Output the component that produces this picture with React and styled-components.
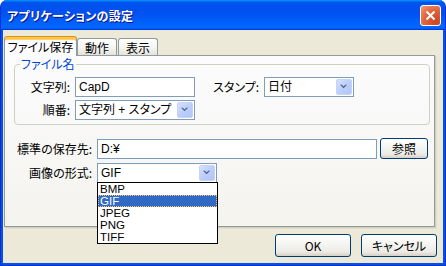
import React from "react";
import styled, { createGlobalStyle } from "styled-components";

const GlobalStyle = createGlobalStyle`
  html, body {
    margin: 0;
    padding: 0;
    background: #ffffff;
  }
  body {
    font-family: "Liberation Sans", "Noto Sans CJK JP", sans-serif;
    font-size: 12px;
    font-feature-settings: "palt";
    color: #000;
  }
`;

const Window = styled.div`
  width: 446px;
  height: 266px;
  box-sizing: border-box;
  display: flex;
  flex-direction: column;
  background: #0a4fe3;
  border: 1px solid #0831d9;
  border-top: none;
  border-radius: 7px 7px 0 0;
  overflow: hidden;
`;

const TitleBar = styled.div`
  height: 30px;
  flex: none;
  margin: 0 -1px;
  display: flex;
  align-items: center;
  justify-content: space-between;
  padding: 0 5px 0 7px;
  background: linear-gradient(
    180deg,
    #0997ff,
    #0053ee 8%,
    #0050ee 40%,
    #06f 88%,
    #06f 93%,
    #005bff 95%,
    #003dd7 96%,
    #003dd7
  );
`;

const Title = styled.div`
  color: #fff;
  font-family: "Noto Sans CJK JP", sans-serif;
  font-weight: bold;
  font-size: 12px;
  letter-spacing: 0.3px;
  text-shadow: 1px 1px 0 #0f1089;
  padding-top: 1px;
`;

const CloseButton = styled.div`
  width: 21px;
  height: 21px;
  box-sizing: border-box;
  border: 1px solid #fff;
  border-radius: 3px;
  background: radial-gradient(circle at 80% 85%, #cc4625 0%, #e0643c 55%, #f29a7b 100%);
  display: flex;
  align-items: center;
  justify-content: center;
`;

const Body = styled.div`
  flex: 1;
  margin: 0 2px 2px;
  background: #ece9d8;
  padding: 6px 6px 6px 1px;
  display: flex;
  flex-direction: column;
`;

const TabStrip = styled.div`
  height: 19px;
  display: flex;
  align-items: flex-end;
`;

const Tab = styled.div`
  position: relative;
  box-sizing: border-box;
  width: ${(p) => p.$width}px;
  height: ${(p) => (p.$active ? 20 : 17)}px;
  margin-bottom: ${(p) => (p.$active ? -1 : 0)}px;
  margin-left: ${(p) => p.$gap || 0}px;
  z-index: ${(p) => (p.$active ? 2 : 1)};
  border: 1px solid #919b9c;
  border-bottom: none;
  border-radius: 3px 3px 0 0;
  background: ${(p) =>
    p.$active ? "#fcfcfe" : "linear-gradient(180deg, #ffffff, #f3f3ef 60%, #e4e3db)"};
  box-shadow: ${(p) => (p.$active ? "inset 0 2px 0 #ffc83c, inset 0 3px 0 #f9d271" : "none")};
  border-top-color: ${(p) => (p.$active ? "#e68b2c" : "#919b9c")};
  display: flex;
  align-items: center;
  justify-content: center;
  padding-top: 1px;
  font-family: "Noto Sans CJK JP", sans-serif;
  line-height: 12px;
`;

const Panel = styled.div`
  height: 172px;
  box-sizing: border-box;
  margin-right: 2px;
  border: 1px solid #919b9c;
  background: linear-gradient(180deg, #fcfcfe, #f4f3ee);
  box-shadow: 1px 1px 0 #d0cebf, 2px 2px 0 #e3e0d0;
  padding: 8px 4px 0 9px;
  display: flex;
  flex-direction: column;
`;

const Group = styled.div`
  position: relative;
  height: 61px;
  box-sizing: border-box;
  border: 1px solid #d0d0bf;
  border-radius: 4px;
  padding: 12px 0 0 0;
  display: flex;
  flex-direction: column;
  gap: 3px;
`;

const Legend = styled.div`
  position: absolute;
  top: -7px;
  left: 5px;
  padding: 0 1px;
  background: #fbfbfc;
  color: #0046d5;
  font-family: "Noto Sans CJK JP", sans-serif;
  line-height: 12px;
`;

const Row = styled.div`
  display: flex;
  align-items: center;
  margin-top: ${(p) => p.$top || 0}px;
`;

const Label = styled.div`
  width: ${(p) => p.$width}px;
  margin-right: 5px;
  text-align: right;
  font-family: "Noto Sans CJK JP", sans-serif;
  line-height: 14px;
  white-space: nowrap;
`;

const TextBox = styled.div`
  width: ${(p) => p.$width}px;
  height: 20px;
  box-sizing: border-box;
  border: 1px solid #7f9db9;
  background: #fff;
  padding-left: 3px;
  display: flex;
  align-items: center;
  line-height: 14px;
`;

const SelectBox = styled.div`
  position: relative;
  width: ${(p) => p.$width}px;
  height: 20px;
  box-sizing: border-box;
  border: 1px solid #7f9db9;
  background: #fff;
  padding-left: 3px;
  display: flex;
  align-items: center;
  justify-content: space-between;
  line-height: 14px;
`;

const ArrowButton = styled.div`
  width: 16px;
  height: 16px;
  margin: 1px;
  box-sizing: border-box;
  border: 1px solid #c5d3f6;
  border-radius: 2px;
  background: linear-gradient(135deg, #d6e1fd 0%, #bccefa 50%, #b1c5f8 100%);
  display: flex;
  align-items: center;
  justify-content: center;
`;

const DropList = styled.div`
  position: absolute;
  top: 100%;
  left: -1px;
  width: ${(p) => p.$width}px;
  box-sizing: border-box;
  border: 1px solid #000;
  background: #fff;
  z-index: 5;
`;

const DropItem = styled.div`
  height: 12px;
  overflow: hidden;
  font-size: 11.5px;
  line-height: 12px;
  padding-left: 2px;
  background: ${(p) => (p.$selected ? "#316ac5" : "transparent")};
  color: ${(p) => (p.$selected ? "#fff" : "#000")};
  outline: ${(p) => (p.$selected ? "1px dotted #f4c56a" : "none")};
  outline-offset: -1px;
`;

const XPButton = styled.div`
  width: ${(p) => p.$width}px;
  height: ${(p) => p.$height || 23}px;
  box-sizing: border-box;
  margin-left: ${(p) => p.$gap || 0}px;
  border: 1px solid #003c74;
  border-radius: 3px;
  background: linear-gradient(180deg, #ffffff 0%, #f4f4f0 45%, #ecebe6 80%, #d6d0c5 100%);
  display: flex;
  align-items: center;
  justify-content: center;
  font-family: "Noto Sans CJK JP", sans-serif;
  line-height: 14px;
`;

const ButtonRow = styled.div`
  margin-top: 7px;
  display: flex;
  justify-content: flex-end;
`;

function Chevron() {
  return (
    <svg width="16" height="16" viewBox="0 0 16 16">
      <polygon points="3.5,5.5 5.5,5.5 7.5,7.5 9.5,5.5 11.5,5.5 7.5,9.5" fill="#4d6185" />
    </svg>
  );
}

function Select({ width, value, children }) {
  return (
    <SelectBox $width={width}>
      <span>{value}</span>
      <ArrowButton>
        <Chevron />
      </ArrowButton>
      {children}
    </SelectBox>
  );
}

const formats = ["BMP", "GIF", "JPEG", "PNG", "TIFF"];

export default function App() {
  return (
    <>
      <GlobalStyle />
      <Window>
        <TitleBar>
          <Title>アプリケーションの設定</Title>
          <CloseButton>
            <svg width="13" height="13" viewBox="0 0 13 13">
              <path d="M2.5 2.5 L10.5 10.5 M10.5 2.5 L2.5 10.5" stroke="#fff" strokeWidth="2" />
            </svg>
          </CloseButton>
        </TitleBar>
        <Body>
          <TabStrip>
            <Tab $active $width={73}>ファイル保存</Tab>
            <Tab $width={40}>動作</Tab>
            <Tab $width={40} $gap={1}>表示</Tab>
          </TabStrip>
          <Panel>
            <Group>
              <Legend>ファイル名</Legend>
              <Row>
                <Label $width={55}>文字列:</Label>
                <TextBox $width={120}>CapD</TextBox>
                <Label $width={64}>スタンプ:</Label>
                <Select width={90} value="日付" />
              </Row>
              <Row>
                <Label $width={55}>順番:</Label>
                <Select width={120} value="文字列 + スタンプ" />
              </Row>
            </Group>
            <Row $top={13}>
              <Label $width={78}>標準の保存先:</Label>
              <TextBox $width={280}>D:¥</TextBox>
              <XPButton $width={48} $height={21} $gap={3}>参照</XPButton>
            </Row>
            <Row $top={4}>
              <Label $width={78}>画像の形式:</Label>
              <Select width={120} value="GIF">
                <DropList $width={121}>
                  {formats.map((f) => (
                    <DropItem key={f} $selected={f === "GIF"}>
                      {f}
                    </DropItem>
                  ))}
                </DropList>
              </Select>
            </Row>
          </Panel>
          <ButtonRow>
            <XPButton $width={76}>OK</XPButton>
            <XPButton $width={76} $gap={10}>キャンセル</XPButton>
          </ButtonRow>
        </Body>
      </Window>
    </>
  );
}
